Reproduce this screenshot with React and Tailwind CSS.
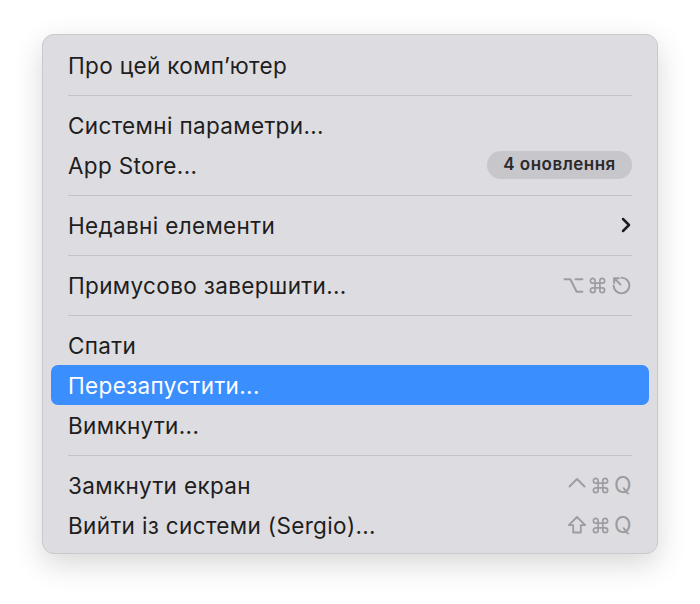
import { ChevronRight, Command } from "lucide-react";

const font = { fontFamily: "Inter, 'Noto Sans', sans-serif" };

function Option() {
  return (
    <svg width="21" height="21" viewBox="0 0 20 20" fill="none" stroke="currentColor" strokeWidth="1.9" strokeLinecap="round" strokeLinejoin="round">
      <path d="M1.5 4h5.5l6 12h5.5M12 4h6.5" />
    </svg>
  );
}

function Escape() {
  return (
    <svg width="21" height="21" viewBox="0 0 20 20" fill="none" stroke="currentColor" strokeWidth="1.9" strokeLinecap="round" strokeLinejoin="round">
      <path d="M10 2.5a7.5 7.5 0 1 1-7.5 7.5" />
      <path d="M3 3l6 6M3 3h4.5M3 3v4.5" />
    </svg>
  );
}

function Caret() {
  return (
    <svg width="20" height="20" viewBox="0 0 20 20" fill="none" stroke="currentColor" strokeWidth="1.9" strokeLinecap="round" strokeLinejoin="round">
      <path d="M2.5 11.5l7.5-7.5 7.5 7.5" />
    </svg>
  );
}

function Shift() {
  return (
    <svg width="20" height="20" viewBox="0 0 20 20" fill="none" stroke="currentColor" strokeWidth="1.8" strokeLinejoin="round">
      <path d="M10 2L1.8 10.2H6.2V17.5H13.8V10.2H18.2Z" />
    </svg>
  );
}

function Keys({ children }) {
  return (
    <span className="flex items-center gap-[4px] text-[#9d9ca1]">{children}</span>
  );
}

function Cmd() {
  return <Command size={19} strokeWidth={2.1} />;
}

function Q() {
  return <span className="w-[18px] text-center text-[23px] leading-none">Q</span>;
}

function Item({ label, active, right }) {
  return (
    <div
      className={
        "flex h-10 items-center justify-between rounded-[7px] px-[17px] text-[22.5px] tracking-[0.35px] " +
        (active ? "bg-[#3b8efe] text-white" : "text-[#1e1e20]")
      }
    >
      <span className="pt-[2px]">{label}</span>
      {right}
    </div>
  );
}

function Sep() {
  return (
    <div className="flex h-5 items-center px-[17px]">
      <div className="h-px w-full bg-[#c3c2c7]" />
    </div>
  );
}

export default function App() {
  return (
    <div className="h-[604px] w-[700px] bg-white pl-[42px] pt-[34px]" style={font}>
      <div className="w-[616px] rounded-[12px] border border-[#c9c8cc] bg-[#dddce1] px-[8px] pb-[8px] pt-[10px] shadow-[0_10px_30px_rgba(0,0,0,0.16)]">
        <Item label="Про цей комп’ютер" />
        <Sep />
        <Item label="Системні параметри..." />
        <Item
          label="App Store..."
          right={
            <span className="flex h-7 w-[145px] items-center justify-center rounded-full bg-[#c7c6cb] text-[17px] font-semibold tracking-[0.5px] text-[#2a2a2c]">
              4 оновлення
            </span>
          }
        />
        <Sep />
        <Item
          label="Недавні елементи"
          right={<ChevronRight size={24} strokeWidth={2.5} className="mr-[-6px] text-[#1e1e20]" />}
        />
        <Sep />
        <Item
          label="Примусово завершити..."
          right={
            <Keys>
              <Option />
              <Cmd />
              <Escape />
            </Keys>
          }
        />
        <Sep />
        <Item label="Спати" />
        <Item label="Перезапустити..." active />
        <Item label="Вимкнути..." />
        <Sep />
        <Item
          label="Замкнути екран"
          right={
            <Keys>
              <Caret />
              <Cmd />
              <Q />
            </Keys>
          }
        />
        <Item
          label="Вийти із системи (Sergio)..."
          right={
            <Keys>
              <Shift />
              <Cmd />
              <Q />
            </Keys>
          }
        />
      </div>
    </div>
  );
}
